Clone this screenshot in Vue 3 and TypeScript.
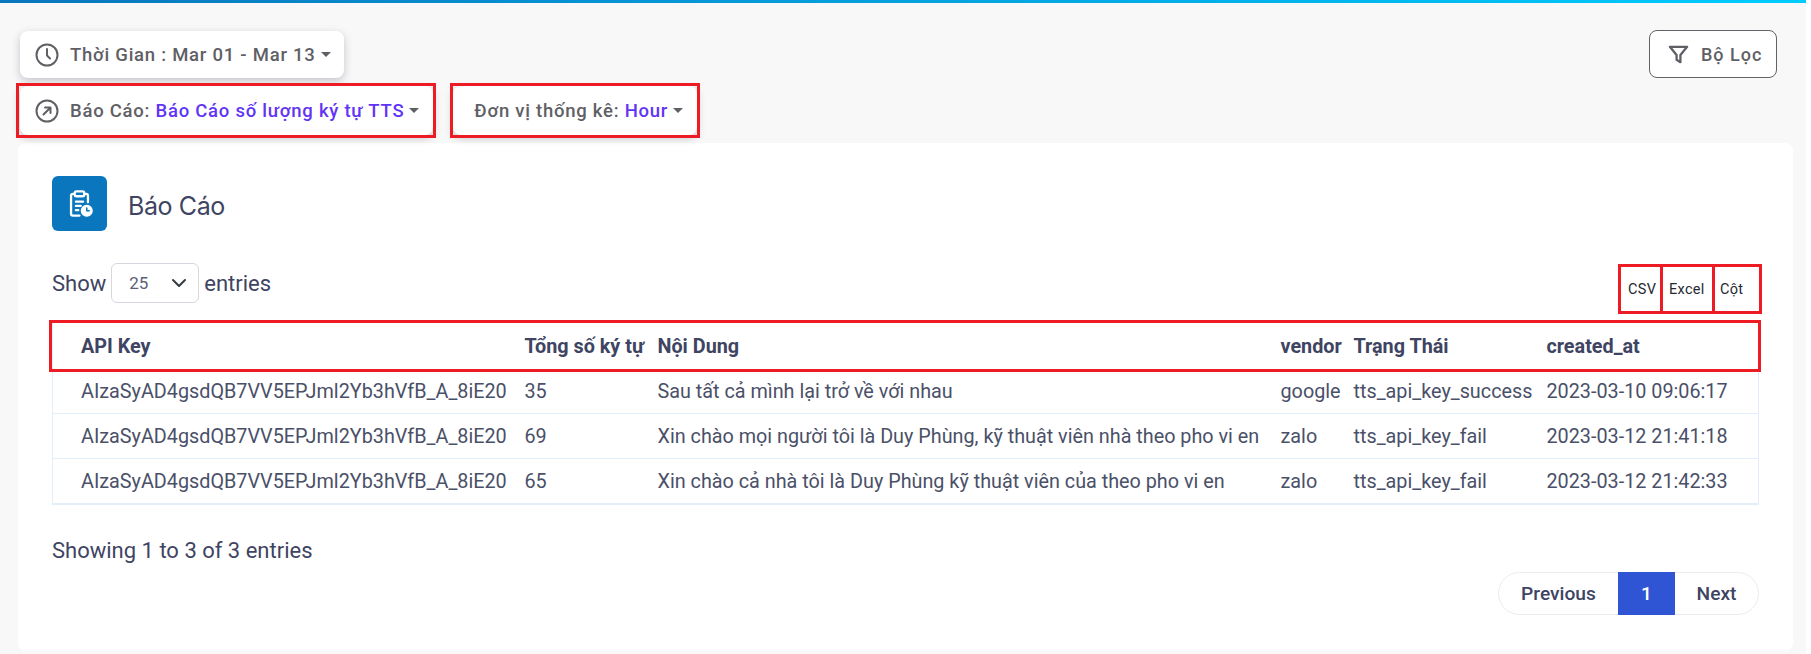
<script setup lang="ts">
interface Row {
  key: string
  total: number
  content: string
  vendor: string
  status: string
  created: string
}
const apiKey = 'AIzaSyAD4gsdQB7VV5EPJml2Yb3hVfB_A_8iE20'
const rows: Row[] = [
  { key: apiKey, total: 35, content: 'Sau tất cả mình lại trở về với nhau', vendor: 'google', status: 'tts_api_key_success', created: '2023-03-10 09:06:17' },
  { key: apiKey, total: 69, content: 'Xin chào mọi người tôi là Duy Phùng, kỹ thuật viên nhà theo pho vi en', vendor: 'zalo', status: 'tts_api_key_fail', created: '2023-03-12 21:41:18' },
  { key: apiKey, total: 65, content: 'Xin chào cả nhà tôi là Duy Phùng kỹ thuật viên của theo pho vi en', vendor: 'zalo', status: 'tts_api_key_fail', created: '2023-03-12 21:42:33' },
]
const columns = ['API Key', 'Tổng số ký tự', 'Nội Dung', 'vendor', 'Trạng Thái', 'created_at']
</script>

<template>
  <div class="page">
    <div class="topbar"></div>
    <div class="toolbar">
      <div class="toolbar-top">
        <button class="pill">
          <svg class="pill-icon" viewBox="0 0 24 24" fill="none" stroke="currentColor" stroke-width="2" stroke-linecap="round" stroke-linejoin="round">
            <circle cx="12" cy="12" r="10.5" />
            <path d="M12 6v6.5l3 3" />
          </svg>
          <span>Thời Gian : Mar 01 - Mar 13</span>
          <i class="caret"></i>
        </button>
        <button class="filter">
          <svg class="filter-icon" viewBox="0 0 24 24" fill="none" stroke="currentColor" stroke-width="2.4" stroke-linejoin="round">
            <path d="M3 4h18l-7 8.5V20l-4-2.5v-5z" />
          </svg>
          <span>Bộ Lọc</span>
        </button>
      </div>
      <div class="toolbar-bottom">
        <button class="pill flagged report">
          <svg class="pill-icon" viewBox="0 0 24 24" fill="none" stroke="currentColor" stroke-width="2" stroke-linecap="round" stroke-linejoin="round">
            <circle cx="12" cy="12" r="10.5" />
            <path d="M8.5 15.5l7-7M10 8.5h5.5V14" />
          </svg>
          <span>Báo Cáo: <em>Báo Cáo số lượng ký tự TTS</em></span>
          <i class="caret"></i>
        </button>
        <button class="pill flagged unit">
          <span>Đơn vị thống kê: <em>Hour</em></span>
          <i class="caret"></i>
        </button>
      </div>
    </div>

    <section class="card">
      <header class="card-head">
        <div class="badge">
          <svg viewBox="0 0 24 24" width="29" height="29" fill="none" stroke="#fff" stroke-width="1.900" stroke-linecap="round" stroke-linejoin="round">
            <path d="M8 4H6.500A1.500 1.500 0 0 0 5 5.500V20.500A1.500 1.500 0 0 0 6.500 22H12" />
            <path d="M16 4h1.500A1.500 1.500 0 0 1 19 5.500V11" />
            <rect x="8" y="2" width="8" height="4" rx="1.500" />
            <path d="M9 10.500h6M9 14h4M9 17.500h2" />
            <circle cx="18" cy="18" r="4.500" fill="#fff" stroke="#fff" stroke-width="1" />
            <path d="M18 15.800V18h2" stroke="#0a76bd" stroke-width="1.300" />
          </svg>
        </div>
        <h2>Báo Cáo</h2>
      </header>

      <div class="controls">
        <label class="length">
          Show
          <span class="select">
            <span>25</span>
            <svg viewBox="0 0 16 16" width="16" height="16" fill="none" stroke="#343a40" stroke-width="2" stroke-linecap="round" stroke-linejoin="round"><path d="M2 5l6 6 6-6" /></svg>
          </span>
          entries
        </label>
        <div class="exports">
          <button class="csv">CSV</button>
          <button class="excel">Excel</button>
          <button class="cot">Cột</button>
        </div>
      </div>

      <div class="table-wrap">
        <table>
          <colgroup>
            <col class="c1" /><col class="c2" /><col class="c3" /><col class="c4" /><col class="c5" /><col class="c6" />
          </colgroup>
          <thead>
            <tr><th v-for="c in columns" :key="c">{{ c }}</th></tr>
          </thead>
          <tbody>
            <tr v-for="r in rows" :key="r.created">
              <td>{{ r.key }}</td>
              <td>{{ r.total }}</td>
              <td>{{ r.content }}</td>
              <td>{{ r.vendor }}</td>
              <td>{{ r.status }}</td>
              <td>{{ r.created }}</td>
            </tr>
          </tbody>
        </table>
        <div class="head-mark"></div>
      </div>

      <p class="info">Showing 1 to 3 of 3 entries</p>

      <nav class="pager">
        <a class="prev">Previous</a>
        <a class="current">1</a>
        <a class="next">Next</a>
      </nav>
    </section>
  </div>
</template>

<style>
html, body { margin: 0; background: #fff; }
</style>

<style scoped>
.page {
  width: 1806px;
  height: 654px;
  overflow: hidden;
  background: #f8f8f8;
  font-family: Roboto, "Noto Sans", sans-serif;
  color: #3e4462;
  box-sizing: border-box;
}
.topbar {
  height: 3px;
  background: linear-gradient(90deg, #0a76bd, #00ccff);
}
.toolbar {
  padding: 27px 29px 0 20px;
}
.toolbar-top {
  display: flex;
  justify-content: space-between;
  align-items: flex-start;
}
.toolbar-bottom {
  display: flex;
  gap: 20px;
  margin-top: 8px;
}
button {
  font-family: inherit;
}
.pill {
  position: relative;
  display: flex;
  align-items: center;
  height: 49px;
  padding: 0 13px 0 15px;
  border: 0;
  border-radius: 8px;
  background: #fff;
  box-shadow: 0 3px 8px rgba(60, 64, 90, 0.28);
  color: #5f6065;
  font-size: 18.500px;
  font-weight: 500;
  letter-spacing: 0.75px;
  white-space: nowrap;
}
.toolbar-top .pill {
  margin-top: 1px;
  height: 47px;
}
.pill-icon {
  width: 24px;
  height: 24px;
  margin-right: 11px;
}
.pill em {
  font-style: normal;
  color: #5f34f5;
}
.caret {
  margin-left: 5px;
  border-top: 5px solid #5f6065;
  border-left: 5px solid transparent;
  border-right: 5px solid transparent;
}
.flagged::after {
  content: "";
  position: absolute;
  inset: -3px;
  border: 3px solid #ed1c24;
  pointer-events: none;
}
.report {
  padding-right: 14px;
}
.report::after {
  inset: -3px -3px -3px -4px;
}
.unit {
  padding-left: 21px;
  padding-right: 14px;
}
.filter {
  display: flex;
  align-items: center;
  gap: 11px;
  width: 128px;
  height: 48px;
  padding: 0 0 0 17px;
  border: 1px solid #5f6368;
  border-radius: 8px;
  background: #fff;
  color: #5f6065;
  font-size: 18px;
  font-weight: 500;
  letter-spacing: 1px;
  box-sizing: border-box;
}
.filter-icon {
  width: 23px;
  height: 23px;
}
.card {
  margin: 8px 13px 0 18px;
  height: 508px;
  padding: 33px 34px 0;
  box-sizing: border-box;
  background: #fff;
  border-radius: 8px;
}
.card-head {
  display: flex;
  align-items: center;
  gap: 21px;
}
.badge {
  display: flex;
  align-items: center;
  justify-content: center;
  width: 55px;
  height: 55px;
  border-radius: 6px;
  background: #0a76bd;
}
h2 {
  margin: 5px 0 0;
  font-family: Inter, Roboto, sans-serif;
  font-size: 25px;
  font-weight: 400;
  letter-spacing: -0.4px;
  color: #3e4462;
}
.controls {
  display: flex;
  justify-content: space-between;
  align-items: flex-start;
  margin-top: 32px;
  height: 57px;
}
.length {
  display: flex;
  align-items: center;
  gap: 5px;
  height: 40px;
  font-size: 22px;
}
.select {
  display: flex;
  align-items: center;
  justify-content: space-between;
  width: 88px;
  height: 40px;
  padding: 0 11px 0 17px;
  box-sizing: border-box;
  border: 1px solid #d8d6de;
  border-radius: 6px;
  font-size: 17px;
  color: #5a6078;
}
.exports {
  display: flex;
  margin: 4px 0 0 0;
  height: 44px;
}
.exports button {
  height: 44px;
  border: 0;
  padding: 0;
  background: #fff;
  color: #24292f;
  font-size: 14.500px;
  letter-spacing: 0.3px;
  text-align: left;
  position: relative;
}
.exports button::after {
  content: "";
  position: absolute;
  inset: -3px;
  border: 3px solid #ed1c24;
  pointer-events: none;
}
.csv { width: 39px; margin-right: 3px; padding-left: 7px !important; }
.excel { width: 49px; margin-right: 3px; padding-left: 6px !important; }
.cot { width: 44px; padding-left: 5px !important; }
.table-wrap {
  position: relative;
  width: 1707px;
}
table {
  width: 100%;
  table-layout: fixed;
  border-collapse: collapse;
  border-left: 1px solid #e3eefb;
  border-right: 1px solid #e3eefb;
  border-bottom: 2px solid #e3eefb;
}
.c1 { width: 472px; }
.c2 { width: 133px; }
.c3 { width: 623px; }
.c4 { width: 73px; }
.c5 { width: 193px; }
th, td {
  padding: 0;
  text-align: left;
  white-space: nowrap;
  overflow: visible;
}
th:first-child, td:first-child { padding-left: 28px; }
th {
  height: 46px;
  padding-top: 3px;
  font-size: 19.800px;
  font-weight: 700;
  color: #3e4462;
}
td {
  height: 44px;
  font-size: 19.800px;
  color: #4a5068;
  border-top: 1px solid #e3eefb;
}
tbody tr:first-child td { border-top: 0; }
.head-mark {
  position: absolute;
  left: -3px;
  top: 0;
  width: 1712px;
  height: 52px;
  box-sizing: border-box;
  border: 3px solid #ed1c24;
  pointer-events: none;
}
.info {
  margin: 32px 0 0;
  font-size: 22px;
  line-height: 28px;
  color: #3e4462;
}
.pager {
  display: flex;
  width: 261px;
  height: 43px;
  margin: 7px 0 0 auto;
  box-sizing: border-box;
  border: 1px solid #ececf0;
  border-radius: 22px;
  font-size: 19.200px;
  font-weight: 500;
  color: #3e4462;
}
.pager a {
  display: flex;
  align-items: center;
  justify-content: center;
}
.prev { width: 119px; }
.current {
  width: 57px;
  margin: -1px 0;
  background: #2f55d4;
  color: #fff;
}
.next { flex: 1; }
</style>
